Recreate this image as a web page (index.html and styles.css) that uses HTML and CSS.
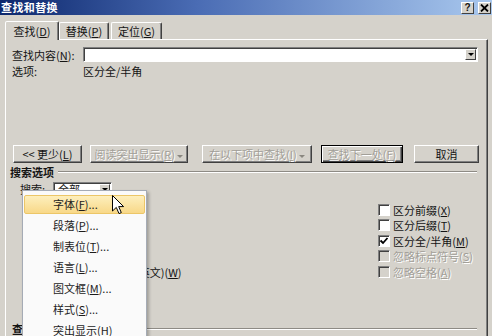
FILE: index.html
```html
<!DOCTYPE html>
<html lang="zh-CN">
<head>
    <meta charset="UTF-8">
    <meta name="viewport" content="width=device-width, initial-scale=1.0">
    <title>查找和替换</title>
    <link rel="stylesheet" href="styles.css">
</head>
<body>
    <div class="dialog">
        <!-- Title bar -->
        <div class="titlebar">
            <span class="title">查找和替换</span>
            <div class="caption-buttons">
                <span class="cap-btn">?</span>
                <span class="cap-btn">
                    <svg width="9" height="8" viewBox="0 0 9 8"><path d="M1 0.5 L8 7.5 M8 0.5 L1 7.5" stroke="#000" stroke-width="1.8"/></svg>
                </span>
            </div>
        </div>

        <!-- Tabs -->
        <div class="tabs">
            <div class="tab tab-find active">查找(<u>D</u>)</div>
            <div class="tab tab-replace">替换(<u>P</u>)</div>
            <div class="tab tab-goto">定位(<u>G</u>)</div>
        </div>

        <div class="panel">
            <div class="find-row">
                <span class="field-label">查找内容(<u>N</u>):</span>
                <div class="combo">
                    <span class="combo-arrow"><span class="arrow"></span></span>
                </div>
            </div>
            <div class="options-row">
                <span class="field-label">选项:</span>
                <span>区分全/半角</span>
            </div>

            <div class="button-row">
                <button class="btn btn-less">&lt;&lt; 更少(<u>L</u>)</button>
                <button class="btn btn-read disabled">阅读突出显示(<u>R</u>) <span class="arrow"></span></button>
                <button class="btn btn-within disabled">在以下项中查找(<u>I</u>) <span class="arrow"></span></button>
                <button class="btn btn-next default disabled">查找下一处(<u>F</u>)</button>
                <button class="btn btn-cancel">取消</button>
            </div>

            <div class="group-title">
                <span class="group-label">搜索选项</span>
                <span class="etched"></span>
            </div>

            <div class="search-row">
                <span class="search-label">搜索:</span>
                <div class="select">
                    <span class="select-text">全部</span>
                    <span class="combo-arrow"><span class="arrow"></span></span>
                </div>
            </div>

            <div class="check-columns">
                <div class="check-list left">
                    <div class="check"><span class="box"></span>区分大小写(<u>H</u>)</div>
                    <div class="check"><span class="box"></span>全字匹配(<u>Y</u>)</div>
                    <div class="check"><span class="box"></span>使用通配符(<u>U</u>)</div>
                    <div class="check"><span class="box"></span>同音(英文)(<u>K</u>)</div>
                    <div class="check"><span class="box"></span>查找单词的所有形式(英文)(<u>W</u>)</div>
                </div>
                <div class="check-list right">
                    <div class="check"><span class="box"></span>区分前缀(<u>X</u>)</div>
                    <div class="check"><span class="box"></span>区分后缀(<u>T</u>)</div>
                    <div class="check">
                        <span class="box"><svg width="10" height="10" viewBox="0 0 10 10"><path d="M1.5 4.5 L4 7 L8.5 2" fill="none" stroke="#000" stroke-width="1.8"/></svg></span>区分全/半角(<u>M</u>)
                    </div>
                    <div class="check disabled"><span class="box"></span>忽略标点符号(<u>S</u>)</div>
                    <div class="check disabled"><span class="box"></span>忽略空格(<u>A</u>)</div>
                </div>
            </div>

            <div class="group-title bottom">
                <span class="group-label">查找</span>
                <span class="etched"></span>
            </div>
        </div>
    </div>

    <!-- Format dropdown menu -->
    <div class="menu">
        <div class="menu-item active">字体(<u>F</u>)...</div>
        <div class="menu-item">段落(<u>P</u>)...</div>
        <div class="menu-item">制表位(<u>T</u>)...</div>
        <div class="menu-item">语言(<u>L</u>)...</div>
        <div class="menu-item">图文框(<u>M</u>)...</div>
        <div class="menu-item">样式(<u>S</u>)...</div>
        <div class="menu-item">突出显示(<u>H</u>)</div>
    </div>

    <!-- Mouse pointer -->
    <svg class="cursor" width="13" height="20" viewBox="0 0 13 20">
        <path d="M0.5 0.5 L0.5 16 L4.3 12.4 L7 18.6 L9.3 17.6 L6.7 11.6 L11.6 11.6 Z" fill="#fff" stroke="#000" stroke-width="1"/>
    </svg>
</body>
</html>
```

FILE: styles.css
```css
* {
    margin: 0;
    padding: 0;
    box-sizing: border-box;
}

body, html {
    width: 492px;
    height: 336px;
    overflow: hidden;
    position: relative;
    background-color: #d5d2cb;
}

body {
    font-family: "Noto Sans CJK SC", "Liberation Sans", sans-serif;
    font-size: 11px;
    color: #141414;
}

u {
    text-decoration: underline;
}

/* Title bar */
.titlebar {
    height: 15px;
    background: linear-gradient(to right, #0c276c, #4a6cb4 40%, #a9c8ee);
    display: flex;
    align-items: center;
    justify-content: space-between;
    padding: 0 1px;
}

.title {
    color: #fff;
    font-weight: bold;
    font-size: 11px;
    letter-spacing: 0.4px;
    line-height: 15px;
}

.caption-buttons {
    display: flex;
    gap: 4px;
}

.cap-btn {
    width: 13px;
    height: 12px;
    background: #d5d2cb;
    border: 1px solid;
    border-color: #fff #404040 #404040 #fff;
    font-family: "Liberation Sans", sans-serif;
    font-size: 10px;
    font-weight: bold;
    line-height: 10px;
    text-align: center;
    display: flex;
    align-items: center;
    justify-content: center;
}

/* Tabs */
.tabs {
    display: flex;
    align-items: flex-end;
    height: 24px;
    padding-left: 5px;
}

.tab {
    height: 17px;
    line-height: 16px;
    border: 1px solid;
    border-bottom: none;
    border-color: #fff #404040 transparent #fff;
    border-radius: 2px 2px 0 0;
    box-shadow: inset -1px 0 #808080;
    text-align: center;
}

.tab-find {
    width: 54px;
}

.tab-replace {
    width: 50px;
}

.tab-goto {
    width: 51px;
    margin-left: 2px;
}

.tab.active {
    height: 19px;
    line-height: 18px;
    margin-bottom: -1px;
    background: #d5d2cb;
    position: relative;
    z-index: 1;
}

/* Tab page */
.panel {
    margin-left: 5px;
    width: 483px;
    height: 300px;
    border-top: 1px solid #fff;
    border-left: 1px solid #fff;
    border-right: 1px solid #404040;
    box-shadow: inset -1px 0 #808080;
    padding: 7px 0 0 6px;
}

.find-row {
    display: flex;
    align-items: center;
    height: 15px;
}

.field-label {
    width: 71px;
}

.combo {
    width: 395px;
    height: 15px;
    background: #fff;
    border: 1px solid;
    border-color: #808080 #fff #fff #808080;
    box-shadow: inset 1px 1px #404040;
    display: flex;
    justify-content: flex-end;
    align-items: center;
    padding-right: 1px;
}

.combo-arrow {
    width: 11px;
    height: 11px;
    background: #d5d2cb;
    border: 1px solid;
    border-color: #fff #404040 #404040 #fff;
    display: flex;
    align-items: center;
    justify-content: center;
}

.arrow {
    display: inline-block;
    width: 0;
    height: 0;
    border-left: 3px solid transparent;
    border-right: 3px solid transparent;
    border-top: 3px solid #000;
    vertical-align: middle;
}

.options-row {
    display: flex;
    margin-top: 2px;
    height: 14px;
    line-height: 14px;
}

/* Buttons */
.button-row {
    display: flex;
    margin-top: 67px;
    height: 18px;
    padding-left: 1px;
}

.btn {
    font: inherit;
    color: #141414;
    height: 18px;
    background: #d5d2cb;
    border: 1px solid;
    border-color: #fff #404040 #404040 #fff;
    box-shadow: inset -1px -1px #808080;
    text-align: center;
    white-space: nowrap;
}

.btn.disabled {
    color: #a29f98;
    text-shadow: 1px 1px #fff;
}

.btn.disabled .arrow {
    border-top-color: #8a8780;
}

.btn.default {
    border-color: #000;
    box-shadow: inset 1px 1px #fff, inset -1px -1px #404040, inset -2px -2px #808080;
}

.btn-less {
    width: 69px;
}

.btn-read {
    width: 98px;
    margin-left: 8px;
}

.btn-within {
    width: 110px;
    margin-left: 14px;
}

.btn-next {
    width: 82px;
    margin-left: 9px;
}

.btn-cancel {
    width: 65px;
    margin-left: 11px;
}

/* Group headings */
.group-title {
    display: flex;
    align-items: center;
    height: 12px;
    margin-top: 3px;
    margin-left: -2px;
}

.group-label {
    font-weight: bold;
}

.etched {
    flex: 1;
    margin-left: 4px;
    margin-right: 10px;
    border-top: 1px solid #8e8b85;
    border-bottom: 1px solid #fff;
}

.group-title.bottom {
    margin-top: 43px;
    margin-left: 0;
}

/* Search options */
.search-row {
    display: flex;
    align-items: center;
    margin-top: 4px;
    height: 14px;
    padding-left: 8px;
}

.search-label {
    width: 33px;
}

.select {
    width: 59px;
    height: 14px;
    background: #fff;
    border: 1px solid;
    border-color: #808080 #fff #fff #808080;
    box-shadow: inset 1px 1px #404040;
    display: flex;
    align-items: center;
    justify-content: space-between;
    padding: 0 1px 0 4px;
}

.check-columns {
    display: flex;
    margin-top: 6px;
}

.check-list.left {
    width: 366px;
    padding-left: 11px;
}

.check-list.left .box {
    margin-right: 1px;
}

.check {
    display: flex;
    align-items: center;
    height: 15.5px;
    white-space: nowrap;
}

.box {
    width: 12px;
    height: 12px;
    margin-right: 3px;
    background: #fff;
    border: 1px solid;
    border-color: #808080 #fff #fff #808080;
    box-shadow: inset 1px 1px #404040;
    display: flex;
    align-items: center;
    justify-content: center;
}

.check.disabled {
    color: #a29f98;
    text-shadow: 1px 1px #fff;
}

.check.disabled .box {
    background: #d5d2cb;
}

/* Dropdown menu */
.menu {
    position: absolute;
    left: 22px;
    top: 190px;
    width: 125px;
    height: 160px;
    background: #fafafa;
    border: 1px solid #a5abb5;
    box-shadow: 2px 2px 3px rgba(0, 0, 0, 0.25);
    padding: 3px 1px;
    z-index: 5;
}

.menu-item {
    height: 21px;
    line-height: 21px;
    padding-left: 29px;
    color: #1c1c1c;
}

.menu-item.active {
    height: 19px;
    line-height: 17px;
    margin: 1px 0;
    background: linear-gradient(#fdefbd, #f8d888);
    border: 1px solid #ecc667;
    border-radius: 2px;
    padding-left: 28px;
}

.cursor {
    position: absolute;
    left: 112px;
    top: 195px;
    z-index: 6;
}
```
